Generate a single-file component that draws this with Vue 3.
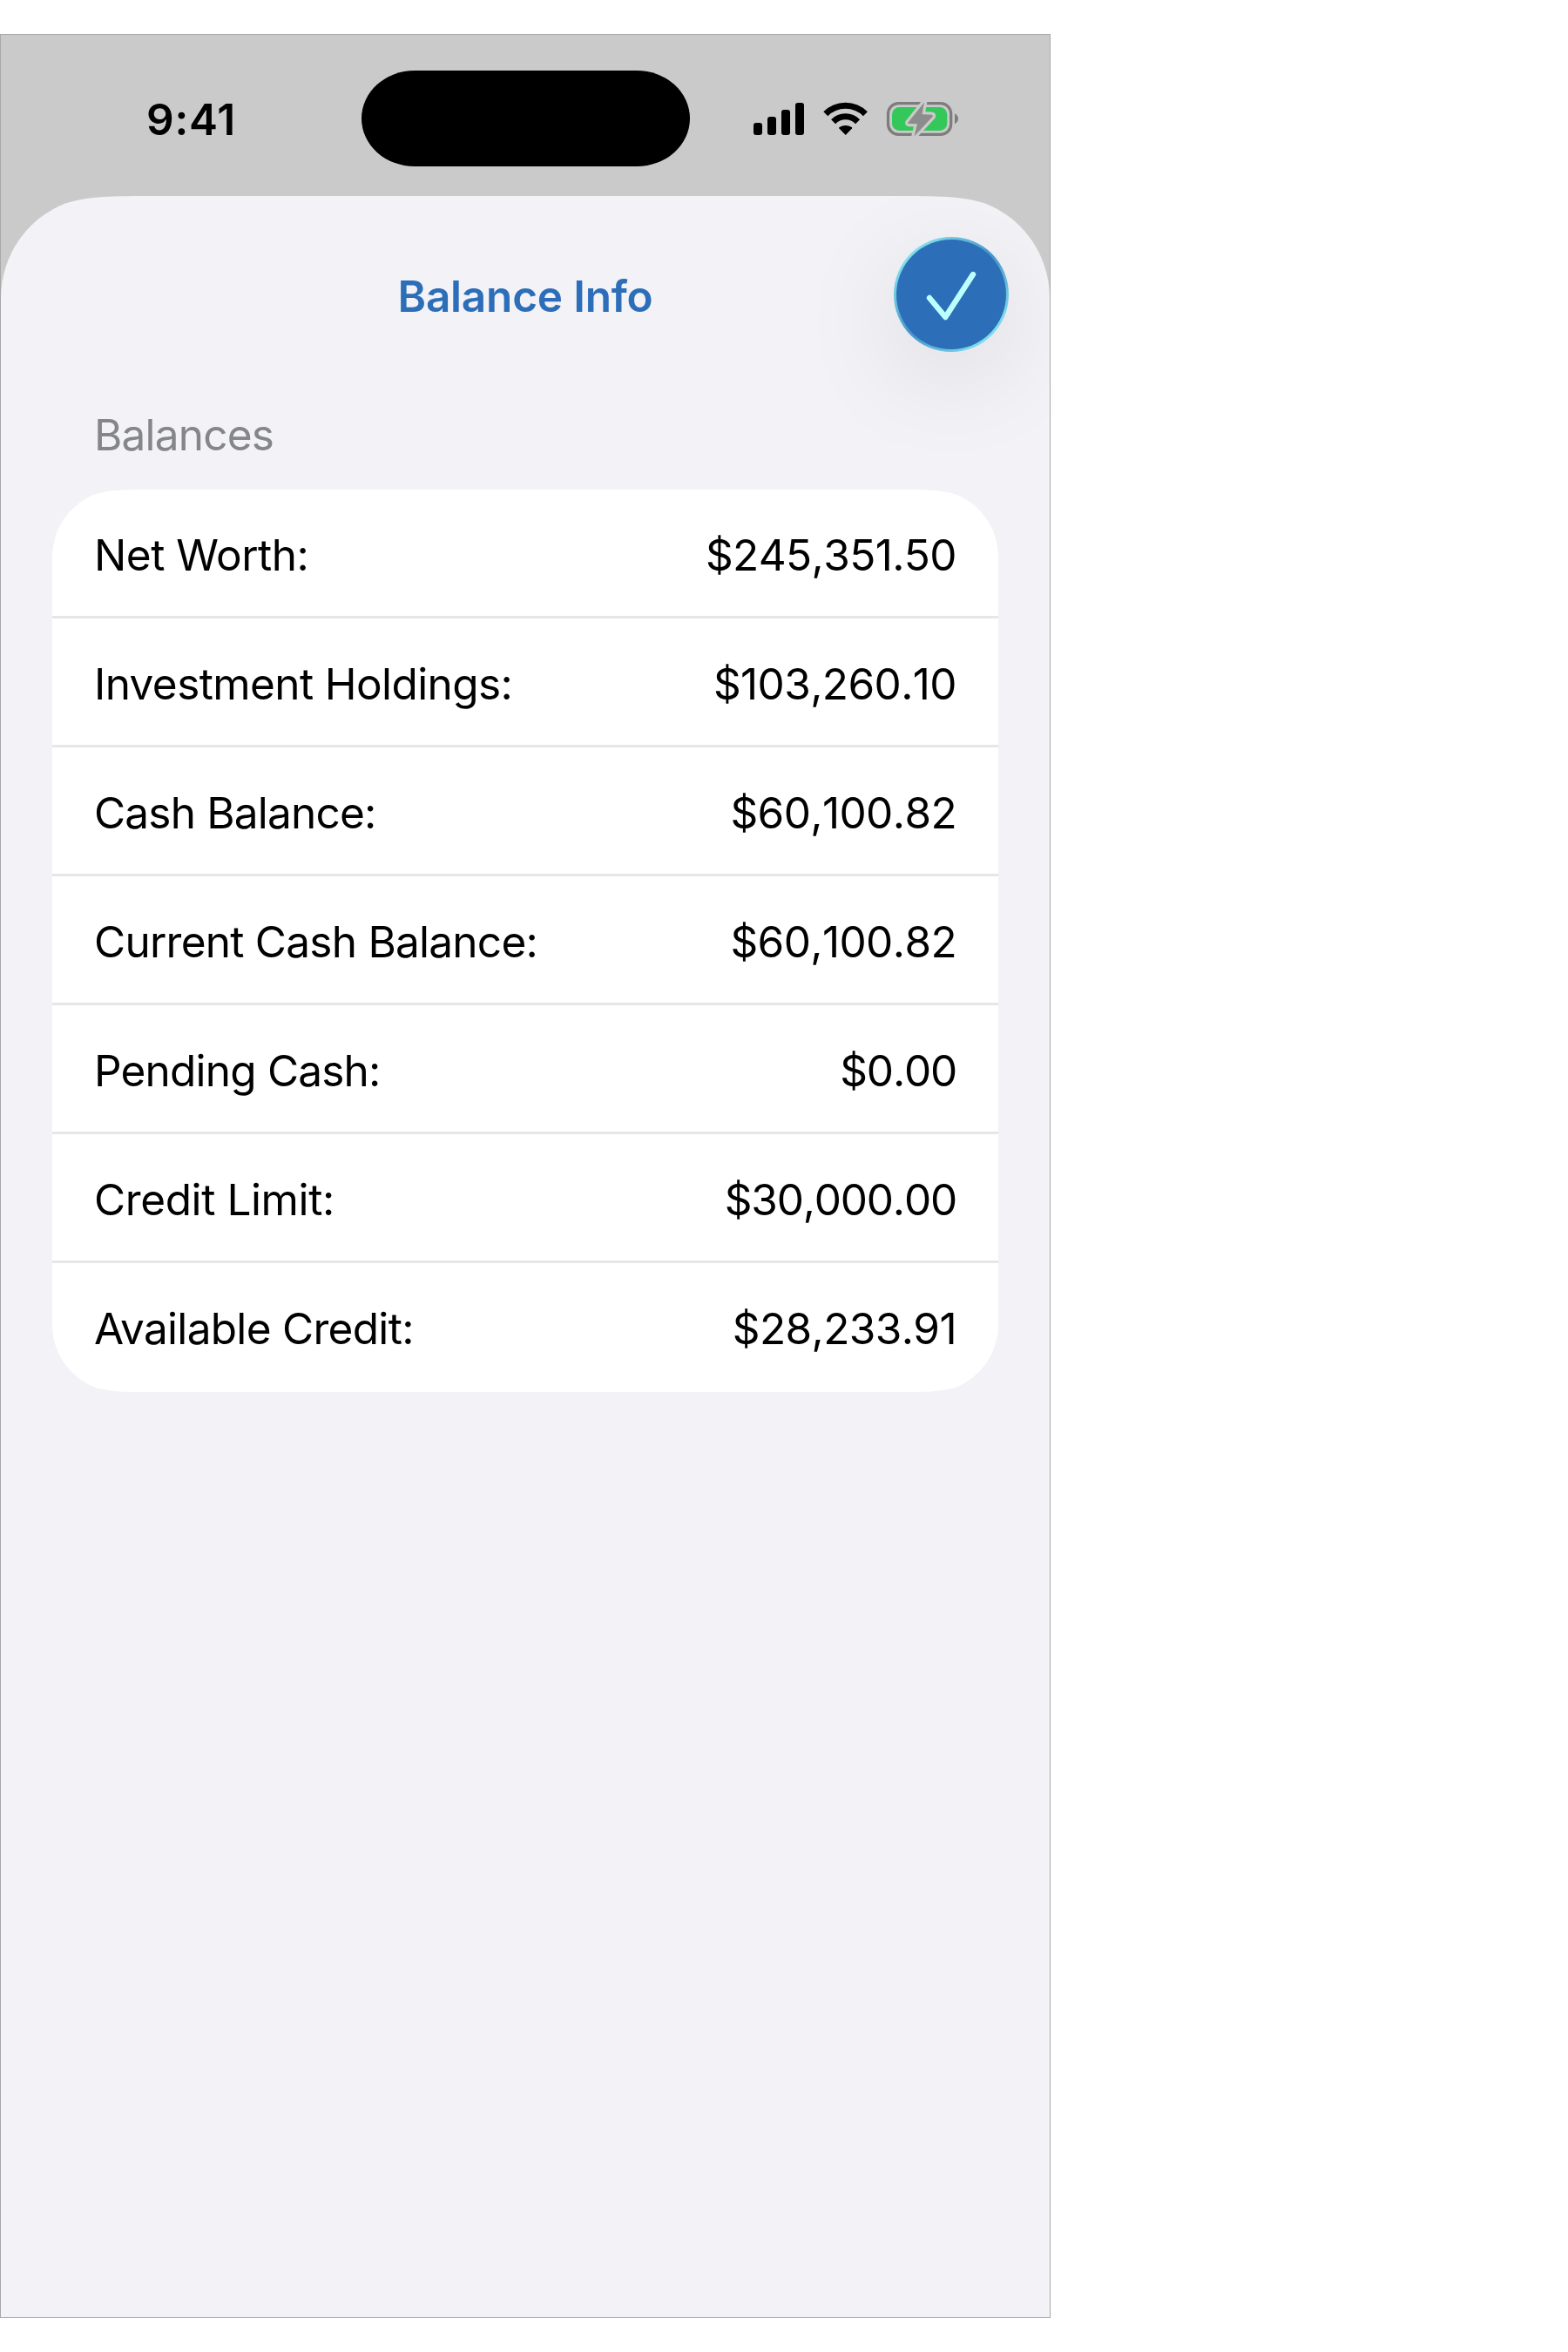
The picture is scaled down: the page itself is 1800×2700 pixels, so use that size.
<template>
  <div class="phone">
    <header class="status-bar">
      <div class="time">9:41</div>
      <div class="island"></div>
      <svg class="status-icons" width="236" height="42" viewBox="0 0 236 42">
        <!-- signal -->
        <rect x="0" y="25" width="10" height="14" rx="3" />
        <rect x="16" y="18" width="10" height="21" rx="3" />
        <rect x="32" y="10" width="10" height="29" rx="3" />
        <rect x="48" y="2" width="10" height="37" rx="3" />
        <!-- wifi -->
        <g class="wifi">
          <path d="M82.8 14.7A32 32 0 0 1 128.4 14.7" />
          <path d="M91.6 23.8A19.5 19.5 0 0 1 119.6 23.8" />
        </g>
        <path d="M105.7 39L98.4 31.6Q97.6 30.7 98.6 30Q105.7 26 112.8 30Q113.8 30.7 113 31.6Z" />
        <!-- battery -->
        <rect class="battery-case" x="154.5" y="2.6" width="72.2" height="35.8" rx="12" />
        <rect class="battery-level" x="159" y="7" width="63.3" height="27" rx="8.5" />
        <path class="battery-cap" d="M231 14.2Q235 16.5 235 20.3Q235 24 231 26.3Z" />
        <path class="bolt-gap" :d="bolt" />
        <path class="bolt" :d="bolt" />
      </svg>
    </header>

    <main class="sheet">
      <div class="sheet-header">
        <h1 class="title">Balance Info</h1>
        <button class="done" aria-label="Done">
          <svg width="60" height="60" viewBox="0 0 60 60">
            <path d="M5 34L23.3 56L55 7" />
          </svg>
        </button>
      </div>

      <h2 class="section-title">Balances</h2>
      <ul class="card">
        <li v-for="item in balances" :key="item.label" class="row">
          <span class="label" :style="{ letterSpacing: `${item.tracking}px` }">{{ item.label }}:</span>
          <span class="amount" :class="{ round: item.amount % 10 === 0 }">{{ formatMoney(item.amount) }}</span>
        </li>
      </ul>
    </main>
  </div>
</template>

<script setup>
const bolt = 'M196 1.5L177.5 24.5Q177 26 178.5 26L188 26.2L184.5 40.5L205.5 18Q206.5 16 204.5 15.8L193.5 15.2Z'

const balances = [
  { label: 'Net Worth', amount: 245351.5, tracking: -0.5 },
  { label: 'Investment Holdings', amount: 103260.1, tracking: -0.6 },
  { label: 'Cash Balance', amount: 60100.82, tracking: -0.8 },
  { label: 'Current Cash Balance', amount: 60100.82, tracking: -0.75 },
  { label: 'Pending Cash', amount: 0, tracking: -0.8 },
  { label: 'Credit Limit', amount: 30000, tracking: -0.4 },
  { label: 'Available Credit', amount: 28233.91, tracking: -0.7 }
]

const formatMoney = (value) =>
  value.toLocaleString('en-US', { style: 'currency', currency: 'USD' })
</script>

<style>
body {
  background: #fff;
}
</style>

<style scoped>
.phone {
  box-sizing: border-box;
  display: flex;
  flex-direction: column;
  width: 1206px;
  height: 2622px;
  margin-top: 39px;
  border: 1px solid #a9a9a9;
  background: #cacaca;
  font-family: Inter, "Liberation Sans", sans-serif;
  font-size: 49.5px;
  line-height: 60px;
  color: #000;
}

.status-bar {
  display: flex;
  align-items: flex-start;
  height: 185px;
  flex: none;
}

.time {
  width: 413.5px;
  padding: 67px 0 0 167px;
  box-sizing: border-box;
  font-weight: 600;
  letter-spacing: 0.8px;
}

.island {
  width: 377px;
  height: 110px;
  margin-top: 41px;
  border-radius: 61px / 55px;
  background: #000;
}

.status-icons {
  margin: 76px 0 0 73.5px;
}

.wifi path {
  fill: none;
  stroke: #000;
  stroke-width: 7;
}

.battery-case {
  fill: none;
  stroke: #7c7c7c;
  stroke-width: 3.2;
}

.battery-level {
  fill: #34c759;
}

.battery-cap {
  fill: #7c7c7c;
}

.bolt {
  fill: #8c8c8c;
}

.bolt-gap {
  fill: #cacaca;
  stroke: #cacaca;
  stroke-width: 6.5;
  stroke-linejoin: round;
}

.sheet {
  flex: 1;
  background: #f2f2f7;
  clip-path: path("M0 117A117 117 0 0 1 73.9 8.4C101.6 0 127.4 0 178.9 0H1025.1C1076.6 0 1102.4 0 1130.1 8.4A117 117 0 0 1 1204 117V2435H0Z");
}

.sheet-header {
  display: grid;
  grid-template-columns: 1fr auto 1fr;
  align-items: center;
  height: 132px;
  padding: 47px 47px 0;
}

.title {
  grid-column: 2;
  margin: 0;
  padding-top: 3px;
  font-size: 49.5px;
  font-weight: 570;
  letter-spacing: -0.2px;
  color: #2c6eb8;
}

.done {
  justify-self: end;
  display: flex;
  align-items: center;
  justify-content: center;
  width: 132px;
  height: 132px;
  padding: 0;
  border: 3px solid transparent;
  border-radius: 50%;
  background:
    linear-gradient(#2c6eb8, #2c6eb8) padding-box,
    linear-gradient(135deg, #84e4ee 12%, #4796cc 48%, #4796cc 52%, #84e4ee 88%) border-box;
  box-shadow: 0 30px 120px rgba(0, 0, 0, 0.1);
}

.done path {
  fill: none;
  stroke: #bbffff;
  stroke-width: 6.4;
  stroke-linecap: round;
  stroke-linejoin: round;
}

.section-title {
  margin: 65px 0 33px 107px;
  font-size: 49.5px;
  font-weight: 400;
  letter-spacing: -0.8px;
  color: #85868c;
}

.card {
  width: 1086px;
  margin: 0 0 0 59px;
  padding: 0;
  list-style: none;
  background: #fff;
  clip-path: path("M0 77A77 77 0 0 1 48.6 5.6C66.9 0 83.8 0 117.7 0H968.3C1002.2 0 1019.1 0 1037.4 5.6A77 77 0 0 1 1086 77V959A77 77 0 0 1 1037.4 1030.4C1019.1 1036 1002.2 1036 968.3 1036H117.7C83.8 1036 66.9 1036 48.6 1030.4A77 77 0 0 1 0 959Z");
}

.row {
  box-sizing: border-box;
  display: flex;
  justify-content: space-between;
  align-items: center;
  height: 148px;
  padding: 4px 48px 0;
  border-bottom: 3px solid #e6e6e6;
}

.row:last-child {
  border-bottom-color: transparent;
}

.amount {
  font-kerning: none;
  letter-spacing: -0.6px;
}

.amount.round {
  letter-spacing: -1.2px;
}
</style>
